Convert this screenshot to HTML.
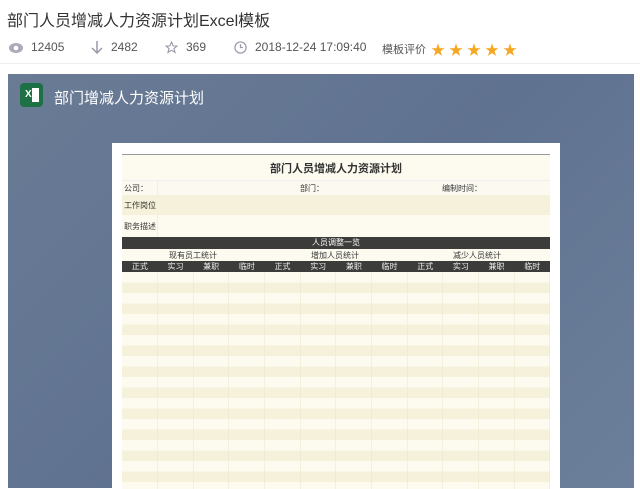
<!DOCTYPE html><html><head><meta charset="utf-8"><style>
*{margin:0;padding:0;box-sizing:border-box}
body{width:640px;height:488px;overflow:hidden;background:#fff;font-family:"Liberation Sans","Noto Sans CJK SC",sans-serif;position:relative}
.a{position:absolute}
.t{font-size:9px;color:#333;white-space:nowrap}
</style></head><body>
<div class="a" style="left:7px;top:7px;font-size:16px;color:#333">部门人员增减人力资源计划Excel模板</div>
<div class="a" style="top:40px;left:0;width:640px;height:16px;font-size:12px;color:#555">
 <svg class="a" style="left:9px;top:3px" width="14" height="10" viewBox="0 0 14 10"><ellipse cx="7" cy="5" rx="7" ry="5" fill="#aab"/><circle cx="7" cy="5" r="2.3" fill="#fff"/></svg>
 <span class="a" style="left:31px;top:0">12405</span>
 <svg class="a" style="left:91px;top:1px" width="12" height="13" viewBox="0 0 12 13"><path d="M6 0V12M1 7L6 12L11 7" stroke="#99a" stroke-width="1.5" fill="none"/></svg>
 <span class="a" style="left:111px;top:0">2482</span>
 <svg class="a" style="left:165px;top:1px" width="13" height="13" viewBox="0 0 24 24"><path d="M12 2L15 9L22 9.5L16.5 14L18.5 21L12 17L5.5 21L7.5 14L2 9.5L9 9Z" stroke="#99a" stroke-width="2" fill="none"/></svg>
 <span class="a" style="left:186px;top:0">369</span>
 <svg class="a" style="left:234px;top:1px" width="13" height="13" viewBox="0 0 14 14"><circle cx="7" cy="7" r="6" stroke="#99a" stroke-width="1.3" fill="none"/><path d="M7 3.5V7H9.5" stroke="#99a" stroke-width="1.3" fill="none"/></svg>
 <span class="a" style="left:255px;top:0">2018-12-24 17:09:40</span>
 <span class="a" style="left:382px;top:1px;font-size:11px">模板评价</span>
 <div class="a" style="left:431px;top:0px;font-size:14px;color:#f5a623;letter-spacing:4px">★★★★★</div>
</div>
<div class="a" style="left:0;top:63px;width:640px;height:1px;background:#eee"></div>
<div class="a" style="left:8px;top:74px;width:626px;height:414px;background:linear-gradient(135deg,#6a7b95,#5f7290 50%,#6c7f9a)"></div>
<div class="a" style="left:20px;top:83px;width:23px;height:24px;background:#1e7145;border-radius:4px"></div>
<div class="a" style="left:25px;top:89px;font-size:10px;color:#fff;font-weight:bold">X</div>
<div class="a" style="left:32px;top:88px;width:7px;height:14px;background:#fff"></div>
<div class="a" style="left:54px;top:87px;font-size:15px;color:#fff">部门增减人力资源计划</div>
<div class="a" style="left:112px;top:143px;width:448px;height:345px;background:#fff"></div>
<div class="a" style="left:122px;top:154px;width:428px;height:334px;background:#fdfbf0;border-top:1px solid #999">
 <div class="a" style="left:0;top:5px;width:428px;text-align:center;font-size:11px;font-weight:bold;color:#333">部门人员增减人力资源计划</div>
 <div class="a" style="left:0;top:25px;width:428px;height:15px;background:#fcfaf0;border-top:1px solid #eee"></div>
 <div class="a" style="left:35px;top:25px;width:1px;height:57px;background:#eee"></div>
 <div class="a t" style="left:2px;top:28px;font-size:8px">公司：</div>
 <div class="a t" style="left:178px;top:28px;font-size:8px">部门：</div>
 <div class="a t" style="left:320px;top:28px;font-size:8px">编制时间：</div>
 <div class="a" style="left:0;top:40px;width:428px;height:20px;background:#f6f1da"></div>
 <div class="a t" style="left:2px;top:45px;font-size:8px">工作岗位</div>
 <div class="a t" style="left:2px;top:66px;font-size:8px">职务描述</div>
 <div class="a" style="left:0;top:82px;width:428px;height:12px;background:#3c3c3a;color:#fff;font-size:8px;text-align:center;line-height:12px">人员调整一览</div>
 <div class="a t" style="left:0;top:95px;width:142px;text-align:center;font-size:8px">现有员工统计</div>
 <div class="a t" style="left:142px;top:95px;width:142px;text-align:center;font-size:8px">增加人员统计</div>
 <div class="a t" style="left:284px;top:95px;width:142px;text-align:center;font-size:8px">减少人员统计</div>
 <div class="a" style="left:0;top:106px;width:428px;height:11px;background:#3c3c3a;display:flex;color:#eee;font-size:8px;line-height:11px">
  <span style="flex:1;text-align:center">正式</span><span style="flex:1;text-align:center">实习</span><span style="flex:1;text-align:center">兼职</span><span style="flex:1;text-align:center">临时</span><span style="flex:1;text-align:center">正式</span><span style="flex:1;text-align:center">实习</span><span style="flex:1;text-align:center">兼职</span><span style="flex:1;text-align:center">临时</span><span style="flex:1;text-align:center">正式</span><span style="flex:1;text-align:center">实习</span><span style="flex:1;text-align:center">兼职</span><span style="flex:1;text-align:center">临时</span>
 </div>
 <div class="a" style="left:0;top:117px;width:428px;height:217px;background:repeating-linear-gradient(#fdfbf0 0 10.5px,#f6f1da 10.5px 21px)"></div>
 <div class="a" style="left:0;top:117px;width:428px;height:217px;background:repeating-linear-gradient(90deg,transparent 0 35.2px,#ebe6cc 35.2px 35.67px)"></div>
</div>
</body></html>
